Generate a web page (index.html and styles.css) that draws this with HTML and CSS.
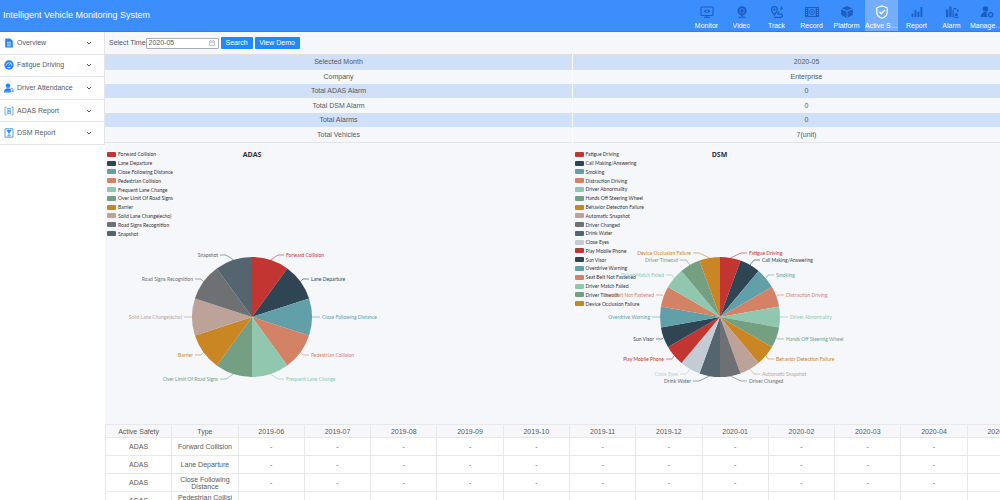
FILE: index.html
```html
<!DOCTYPE html>
<html lang="en">
<head>
<meta charset="utf-8">
<title>Intelligent Vehicle Monitoring System</title>
<link rel="stylesheet" href="styles.css">
</head>
<body>
<header class="topbar">
  <h1 class="brand">Intelligent Vehicle Monitoring System</h1>
  <nav class="tabs">
    <a class="tab" href="#"><svg viewBox="0 0 14 14"><rect x="1" y="2" width="12" height="8.500" rx=".8" fill="none" stroke="currentColor" stroke-width="1.100"/><path d="M3.500 6.200Q7 2.600 10.500 6.200Q7 9.800 3.500 6.200Z" fill="currentColor"/><circle cx="7" cy="6.200" r="1" fill="#3b8efc"/><path d="M7 10.500v1.500M4 12.300h6" stroke="currentColor" stroke-width="1.200"/></svg><span>Monitor</span></a>
    <a class="tab" href="#"><svg viewBox="0 0 14 14"><circle cx="7" cy="5.800" r="4.600" fill="currentColor"/><circle cx="7" cy="5.800" r="2.300" fill="none" stroke="#3b8efc" stroke-width=".8"/><path d="M6.200 10h1.600v1.500h-1.600z" fill="currentColor"/><path d="M3.500 12.300h7" stroke="currentColor" stroke-width="1.200"/></svg><span>Video</span></a>
    <a class="tab" href="#"><svg viewBox="0 0 14 14" fill="none" stroke="currentColor"><path d="M4.300 10C2.400 7.500 1.400 6 1.400 4.600a2.900 2.900 0 0 1 5.800 0C7.200 6 6.200 7.500 4.300 10Z" stroke-width="1.300"/><circle cx="4.300" cy="4.600" r=".8" fill="currentColor"/><path d="M4 12.300h6.500c2.800 0 2.300-3.300 0-3.300h-1.500c-1.800 0-1.500-2 .2-2.500" stroke-width="1.300"/><path d="M11.500 1.500v3M10 4.500l2.800-1.500" stroke-width="1.200"/></svg><span>Track</span></a>
    <a class="tab" href="#"><svg viewBox="0 0 14 14"><path d="M0 2h14v10H0z" fill="currentColor"/><path d="M3.300 3.100h7.400v7.800H3.300z" fill="#3b8efc"/><path d="M1.500 3v8M12.500 3v8" stroke="#3b8efc" stroke-width="1" stroke-dasharray="1 1"/><circle cx="7" cy="7" r="2.500" fill="none" stroke="currentColor"/><circle cx="7" cy="7" r=".9" fill="currentColor"/></svg><span>Record</span></a>
    <a class="tab" href="#"><svg viewBox="0 0 14 14" fill="currentColor"><path d="M7 1l5.300 2.300L7 5.600 1.700 3.300zM1.200 4.200l5.300 2.300v6.200L1.200 10zM12.800 4.200L7.500 6.500v6.200l5.300-2.700z"/></svg><span>Platform</span></a>
    <a class="tab active" href="#"><svg viewBox="0 0 14 14" fill="none" stroke="currentColor"><path d="M7 .9l5.200 1.900v4.600c0 2.600-2.200 4.600-5.200 5.900-3-1.300-5.200-3.300-5.200-5.900V2.800z" stroke-width="1.200"/><path d="M4.300 6.700l2.100 2.100L9.900 5" stroke-width="1.300"/></svg><span>Active Safety</span></a>
    <a class="tab" href="#"><svg viewBox="0 0 14 14" fill="currentColor"><path d="M1.500 8.500h1.800V12H1.500zM4.500 5h1.800v7H4.500zM7.500 6.800h1.800V12H7.500zM10.500 2h1.800v10h-1.800z"/></svg><span>Report</span></a>
    <a class="tab" href="#"><svg viewBox="0 0 14 14" fill="currentColor"><path d="M1 4.500h2.200V12H1zM4.300 1.500h2.200V12H4.300zM7.500 5h1.200v7H7.500z"/><path d="M9 11.800h4.500v1H9zM9.500 11c0-4 3.500-4 3.500 0zM8.500 3h3v1.500h-3zM12 4.500h1.500V7H12z"/></svg><span>Alarm</span></a>
    <a class="tab" href="#"><svg viewBox="0 0 14 14" fill="currentColor"><circle cx="5.500" cy="4" r="2.800"/><path d="M.8 12c0-3.500 2-5 4.700-5 1 0 1.500.2 2 .6-1.200 1.400-1.200 3 0 4.400z"/><circle cx="10.600" cy="9.700" r="2" fill="none" stroke="currentColor" stroke-width="1.300"/><path d="M10.600 6.700v1M10.600 11.700v1M7.700 9.700h1M12.500 9.700h1" stroke="currentColor"/></svg><span>Management</span></a>
  </nav>
</header>
<div class="layout">
  <aside class="sidebar">
    <button class="side-item" type="button"><svg class="side-icon" viewBox="0 0 10 10"><path d="M1.200.5h5l2.600 2.600v6.400H1.200z" fill="#2684f5"/><path d="M3 4.300h4M3 6h4M3 7.700h4" stroke="#fff" stroke-width=".7"/></svg><span>Overview</span><svg class="chevron" viewBox="0 0 6 4"><path d="M1 1l2 2 2-2"/></svg></button>
    <button class="side-item" type="button"><svg class="side-icon" viewBox="0 0 10 10"><circle cx="5" cy="5" r="4.700" fill="#2684f5"/><path d="M2.200 5.500a2.800 2.800 0 1 1 5.600 0M5 5.500l1.500-2" stroke="#fff" stroke-width=".7" fill="none"/><path d="M3.500 7.500h3" stroke="#fff" stroke-width=".8"/></svg><span>Fatigue Driving</span><svg class="chevron" viewBox="0 0 6 4"><path d="M1 1l2 2 2-2"/></svg></button>
    <button class="side-item" type="button"><svg class="side-icon" viewBox="0 0 10 10" fill="#2684f5"><circle cx="4" cy="2.800" r="2.300"/><path d="M0 8.800c0-2.200 1.500-3.500 4-3.500s3 1 3 3.500z"/><path d="M0 9.200h6.500" stroke="#2684f5" stroke-width=".8"/><circle cx="7.700" cy="6.800" r="1.500" fill="#fff" stroke="#2684f5" stroke-width=".7"/><path d="M8.600 8l1 1.300" stroke="#2684f5"/></svg><span>Driver Attendance</span><svg class="chevron" viewBox="0 0 6 4"><path d="M1 1l2 2 2-2"/></svg></button>
    <button class="side-item" type="button"><svg class="side-icon" viewBox="0 0 10 10" fill="none" stroke="#4a9af7" stroke-width=".8"><path d="M2.500 1H1v8h1.500M7.500 1H9v8H7.500"/><path d="M3 2.500h4M3 4h4M3.300 5.300h3.400v2.400H3.300zM5 4v4"/></svg><span>ADAS Report</span><svg class="chevron" viewBox="0 0 6 4"><path d="M1 1l2 2 2-2"/></svg></button>
    <button class="side-item" type="button"><svg class="side-icon" viewBox="0 0 10 10" fill="none" stroke="#2684f5" stroke-width=".8"><path d="M1 .8h8v8.400H1z"/><path d="M3 2.300h4L5 5zM5 5v2.500M3.200 7.800h3.600" fill="#2684f5"/></svg><span>DSM Report</span><svg class="chevron" viewBox="0 0 6 4"><path d="M1 1l2 2 2-2"/></svg></button>
  </aside>
  <main class="content">
    <form class="toolbar">
      <label for="month">Select Time</label>
      <span class="date-field"><input id="month" type="text" value="2020-05"><svg viewBox="0 0 6 6"><path d="M.5 1h5v4.500h-5zM.5 2.300h5M1.700 0v1M4.300 0v1"/></svg></span>
      <button class="btn search" type="button">Search</button>
      <button class="btn demo" type="button">View Demo</button>
    </form>
    <table class="summary">
      <tbody>
        <tr><th scope="row">Selected Month</th><td>2020-05</td></tr>
        <tr><th scope="row">Company</th><td>Enterprise</td></tr>
        <tr><th scope="row">Total ADAS Alarm</th><td>0</td></tr>
        <tr><th scope="row">Total DSM Alarm</th><td>0</td></tr>
        <tr><th scope="row">Total Alarms</th><td>0</td></tr>
        <tr><th scope="row">Total Vehicles</th><td>7(unit)</td></tr>
      </tbody>
    </table>
    <div class="charts">
      <section class="chart" id="adas"><h2>ADAS</h2><ul class="legend legend-adas"></ul></section>
      <section class="chart" id="dsm"><h2>DSM</h2><ul class="legend legend-dsm"></ul></section>
    </div>
    <table class="monthly">
      <thead><tr><th>Active Safety</th><th>Type</th><th>2019-06</th><th>2019-07</th><th>2019-08</th><th>2019-09</th><th>2019-10</th><th>2019-11</th><th>2019-12</th><th>2020-01</th><th>2020-02</th><th>2020-03</th><th>2020-04</th><th>2020-05</th></tr></thead>
      <tbody>
        <tr><td>ADAS</td><td>Forward Collision</td><td>-</td><td>-</td><td>-</td><td>-</td><td>-</td><td>-</td><td>-</td><td>-</td><td>-</td><td>-</td><td>-</td><td></td></tr>
        <tr><td>ADAS</td><td>Lane Departure</td><td>-</td><td>-</td><td>-</td><td>-</td><td>-</td><td>-</td><td>-</td><td>-</td><td>-</td><td>-</td><td>-</td><td></td></tr>
        <tr><td>ADAS</td><td>Close Following Distance</td><td>-</td><td>-</td><td>-</td><td>-</td><td>-</td><td>-</td><td>-</td><td>-</td><td>-</td><td>-</td><td>-</td><td></td></tr>
        <tr><td>ADAS</td><td>Pedestrian&nbsp;Collision</td><td></td><td></td><td></td><td></td><td></td><td></td><td></td><td></td><td></td><td></td><td></td><td></td></tr>
      </tbody>
    </table>
  </main>
</div>
<script src="charts.js"></script>
</body>
</html>
```
FILE: styles.css
```css
* { box-sizing: border-box; }
body {
  margin: 0;
  height: 100vh;
  overflow: hidden;
  display: flex;
  flex-direction: column;
  font: 7px/8px "Liberation Sans", Arial, sans-serif;
  color: #55595f;
  background: #fff;
}
button, input { font: inherit; color: inherit; }

.topbar {
  display: flex;
  justify-content: space-between;
  flex: none;
  height: 32px;
  background: #3b8efc;
  border-bottom: 1px solid #2b7fee;
}
.brand {
  margin: 0;
  padding-left: 3px;
  font-size: 9px;
  font-weight: 400;
  line-height: 31px;
  color: #fff;
}
.tabs { display: flex; gap: 2px; margin-right: -3px; }
.tab {
  width: 33px;
  padding-top: 5px;
  display: flex;
  flex-direction: column;
  align-items: center;
  gap: 3px;
  color: #1c5fc0;
  text-decoration: none;
}
.tab svg { width: 14px; height: 14px; }
.tab span {
  max-width: 100%;
  overflow: hidden;
  white-space: nowrap;
  text-overflow: ellipsis;
  color: #fff;
}
.tab.active { background: #74aefb; color: #fff; }

.layout { display: flex; flex: 1; min-height: 0; }
.sidebar {
  flex: none;
  width: 105px;
  border-right: 1px solid #e2e4e8;
  display: grid;
  grid-auto-rows: 1fr;
  height: 113px;
}
.side-item {
  display: flex;
  align-items: center;
  gap: 3px;
  padding: 0 12px 0 4px;
  background: #fff;
  border: 0;
  border-bottom: 1px solid #e2e4e8;
  text-align: left;
}
.side-item span { flex: 1; }
.side-icon { width: 10px; height: 10px; }
.chevron { width: 6px; height: 4px; fill: none; stroke: #555; }

.content {
  flex: none;
  width: calc(100% - 65px);
  background: #f5f7fb;
}
.toolbar {
  display: flex;
  align-items: center;
  gap: 2px;
  height: 22px;
  padding-left: 4px;
}
.toolbar label { margin-right: -2px; }
.date-field {
  display: flex;
  align-items: center;
  width: 73px;
  height: 11px;
  padding: 0 3px 0 2px;
  background: #fff;
  border: 1px solid #aaadb3;
  border-radius: 1px;
}
.date-field input {
  flex: 1;
  min-width: 0;
  padding: 0;
  border: 0;
  outline: 0;
  background: none;
}
.date-field svg { width: 6px; height: 6px; fill: none; stroke: #c0c4cc; stroke-width: 1px; }
.btn {
  height: 12px;
  padding: 0;
  border: 0;
  border-radius: 1px;
  background: #2288f3;
  color: #fff;
}
.search { width: 32px; }
.demo { width: 45px; }

.summary {
  width: 100%;
  height: 89px;
  border-collapse: collapse;
  table-layout: fixed;
  border-top: 1px solid #dfe0e2;
  border-bottom: 1px solid #e2e4e8;
  text-align: center;
}
.summary th, .summary td { padding: 0; font-weight: 400; }
.summary th { border-right: 1px solid #fafcff; }
.summary tr:nth-child(odd) { background: #cfe0f8; }

.charts { display: grid; grid-template-columns: 1fr 1fr; }
.chart { display: grid; grid-template-columns: 294px; align-items: start; }
.chart > * { grid-area: 1 / 1; }
.chart h2 {
  margin: 0;
  padding-top: 7px;
  font: bold 7px/10px "Open Sans", sans-serif;
  text-align: center;
  color: #333;
}
.pie { width: 294px; height: 281px; overflow: visible; font: 5px "Lato", sans-serif; }
.legend {
  margin: 7px 0 0;
  padding: 0 0 0 2px;
  list-style: none;
  display: grid;
  grid-auto-rows: 1fr;
  align-items: center;
  font: 5px/8px "Lato", sans-serif;
  color: #333;
}
.legend-adas { height: 88px; }
.legend-dsm { height: 158px; }
.legend li { display: flex; align-items: center; gap: 2px; }
.swatch { width: 9px; height: 5px; border-radius: 1px; }

.monthly {
  width: calc(100% - 6px);
  border-collapse: collapse;
  table-layout: fixed;
  background: #fff;
  text-align: center;
  line-height: 7px;
}
.monthly th, .monthly td {
  padding: 0 5px;
  border: 1px solid #e6e8eb;
  font-weight: 400;
  overflow-wrap: anywhere;
}
.monthly th { height: 13px; padding: 0; background: #f7f7f9; }
.monthly td { height: 18px; }
```
FILE: charts.js
```js
const palette = ['#c23531', '#2f4554', '#61a0a8', '#d48265', '#91c7ae', '#749f83', '#ca8622', '#bda29a', '#6e7074', '#546570', '#c4ccd3'];
const SVG = 'http://www.w3.org/2000/svg';
const cx = 147, cy = 174, radius = 60;

function add(parent, tag, attrs, text) {
  const el = document.createElementNS(SVG, tag);
  for (const key in attrs) el.setAttribute(key, attrs[key]);
  if (text) el.textContent = text;
  parent.appendChild(el);
}

// offsets: distance of each right-hand label from the centre, top to bottom
function drawPie(id, names, offsets) {
  const root = document.getElementById(id);
  const legend = root.querySelector('.legend');
  const svg = document.createElementNS(SVG, 'svg');
  svg.setAttribute('class', 'pie');
  svg.setAttribute('viewBox', '0 0 294 281');
  const n = names.length;
  const at = a => [cx + radius * Math.sin(a), cy - radius * Math.cos(a)];
  names.forEach((name, i) => {
    const color = palette[i % palette.length];
    const step = 2 * Math.PI / n;
    const a = at(i * step), b = at((i + 1) * step), m = at((i + 0.5) * step);
    add(svg, 'path', { d: `M${cx} ${cy}L${a}A${radius} ${radius} 0 0 1 ${b}Z`, fill: color });
    const right = i < n / 2;
    const [dx, dy] = offsets[right ? i : n - 1 - i];
    const s = right ? 1 : -1;
    const x = cx + s * dx, y = cy + dy;
    add(svg, 'path', { d: `M${m}L${x - s * 8} ${y}H${x - s * 2}`, fill: 'none', stroke: color, 'stroke-width': 0.6 });
    add(svg, 'text', { x, y: y + 2, fill: color, 'text-anchor': right ? 'start' : 'end' }, name);
    const item = document.createElement('li');
    const swatch = document.createElement('span');
    swatch.className = 'swatch';
    swatch.style.background = color;
    item.append(swatch, name);
    legend.appendChild(item);
  });
  root.appendChild(svg);
}

drawPie('adas', ['Forward Collision', 'Lane Departure', 'Close Following Distance', 'Pedestrian Collision', 'Frequent Lane Change', 'Over Limit Of Road Signs', 'Barrier', 'Solid Lane Change(echo)', 'Road Signs Recognition', 'Snapshot'],
  [[34, -62], [59, -38], [70, 0], [59, 38], [34, 62]]);

const dsm = ['Fatigue Driving', 'Call Making/Answering', 'Smoking', 'Distraction Driving', 'Driver Abnormality', 'Hands Off Steering Wheel', 'Behavior Detection Failure', 'Automatic Snapshot', 'Driver Changed', 'Drink Water', 'Close Eyes', 'Play Mobile Phone', 'Sun Visor', 'Overdrive Warning', 'Seat Belt Not Fastened', 'Driver Match Failed', 'Driver Timeout', 'Device Occlusion Failure'];
drawPie('dsm', dsm,
  [[29, -64], [42, -57], [56, -42], [66, -22], [70, 0], [66, 22], [56, 42], [42, 57], [29, 64]]);
```
